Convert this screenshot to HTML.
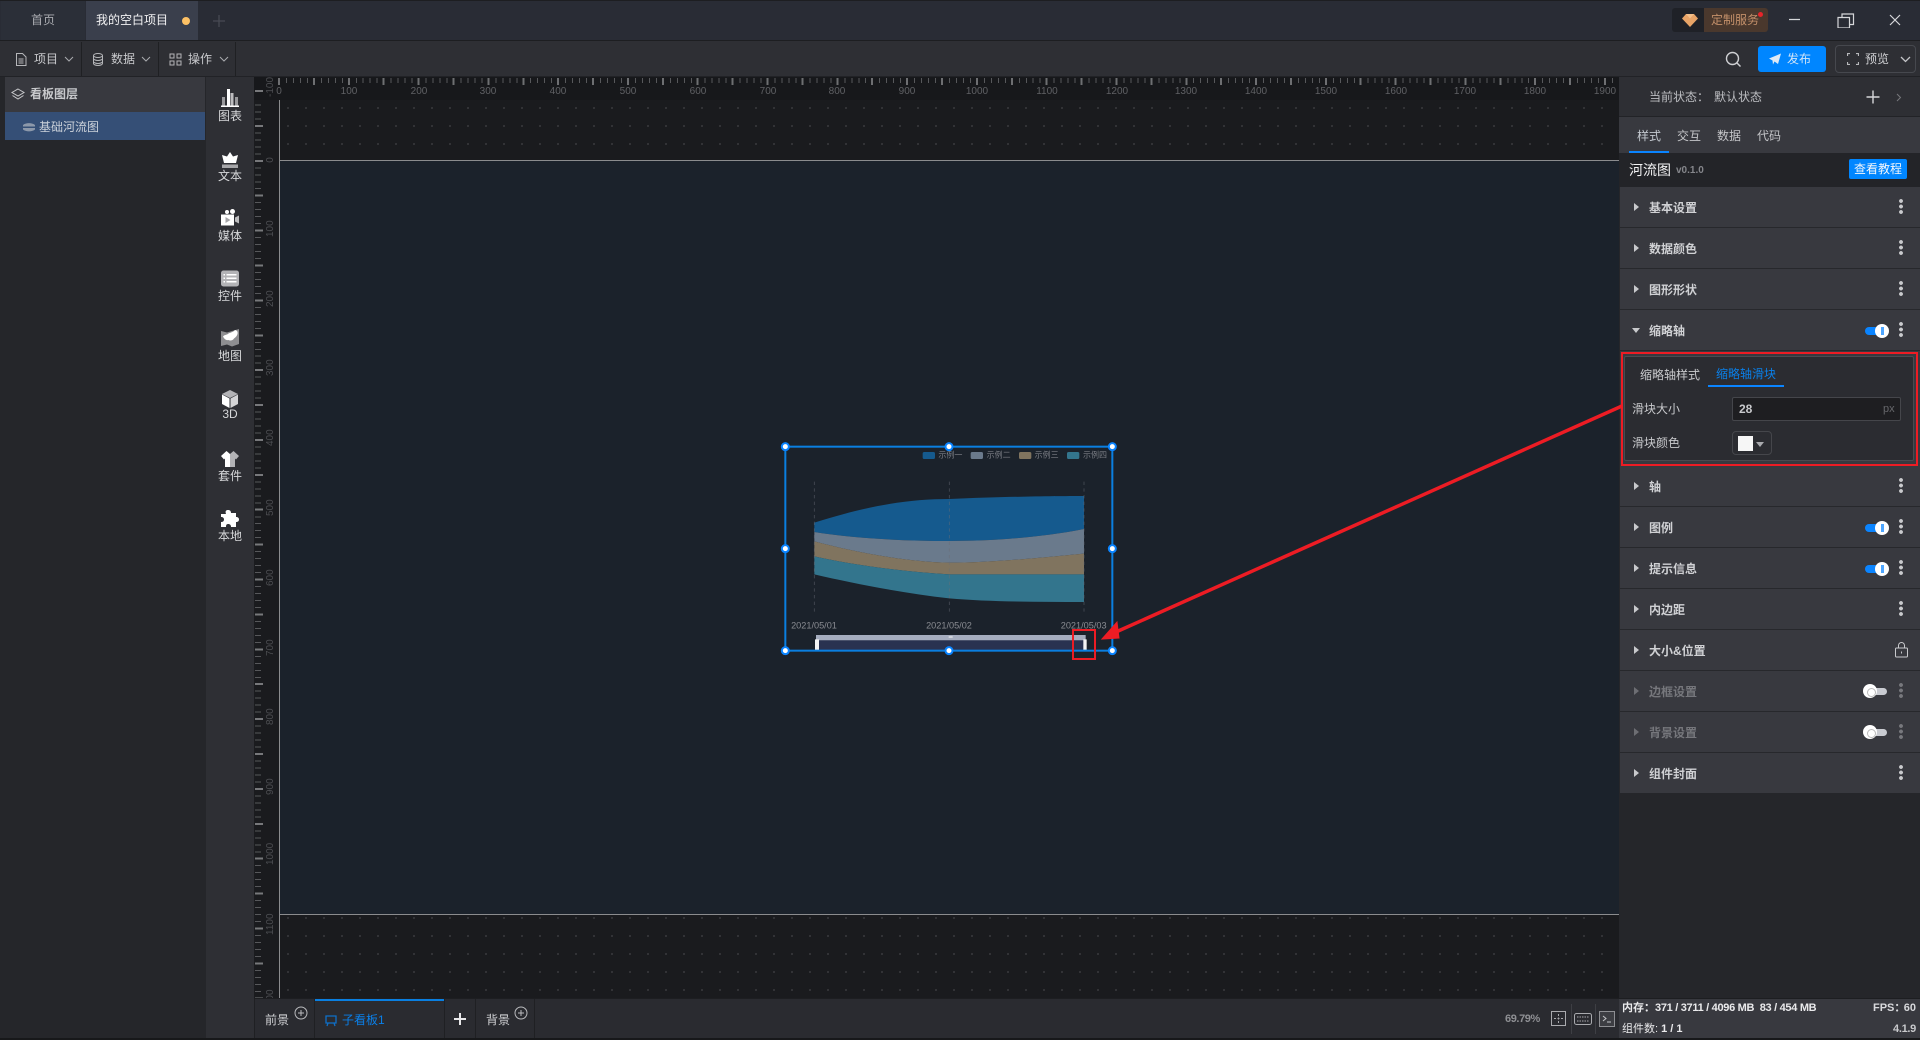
<!DOCTYPE html>
<html lang="zh"><head><meta charset="utf-8"><title>河流图</title>
<style>
*{box-sizing:border-box;margin:0;padding:0}
html,body{width:1920px;height:1040px;overflow:hidden;background:#1a1b1e}
body{position:relative;font-family:"Liberation Sans","Noto Sans CJK SC",sans-serif;font-size:12px;color:#d2d3d6}
.a{position:absolute}
.t{position:absolute;white-space:nowrap;line-height:16px;height:16px}
.rule{position:absolute;font-size:10px;color:#5f6064;line-height:12px;white-space:nowrap;transform:translateX(-50%)}
.vr{position:absolute;left:264px;width:14px;text-align:center;font-size:10px;color:#4c4d51;line-height:12px;transform:translateY(-50%) rotate(-90deg);white-space:nowrap}
.row{position:absolute;left:1620px;width:300px;background:#38393f;border-bottom:1px solid #27282c;height:41px}
.row .l{position:absolute;left:29px;top:13px;font-weight:700;color:#d0d1d4;line-height:16px;white-space:nowrap}
.row.dis .l{color:#76777c}
.tri{position:absolute;left:14px;top:16px;width:0;height:0;border-left:5px solid #c8c9cc;border-top:4px solid transparent;border-bottom:4px solid transparent}
.row.dis .tri{border-left-color:#6d6e73}
.dots{position:absolute;left:279px;top:12px;width:4px;height:15px;background:radial-gradient(circle at 2px 2px,#c9cacd 1.8px,transparent 2px) 0 0/4px 5.500px repeat-y}
.row.dis .dots{background-image:radial-gradient(circle at 2px 2px,#77787d 1.8px,transparent 2px)}
.on{position:absolute;left:245px;top:17px;width:23px;height:8px;border-radius:4px;background:#0a84ff}
.on:after{content:"";position:absolute;right:-1px;top:-3px;width:14px;height:14px;border-radius:50%;background:#fff}
.on:before{content:"";position:absolute;right:4px;top:0;width:3px;height:8px;background:#4ea6ff;z-index:1}
.off{position:absolute;left:250px;top:17px;width:17px;height:7px;border-radius:0 4px 4px 0;background:#c9cbd1}
.off:after{content:"";position:absolute;left:-7px;top:-4px;width:14px;height:14px;border-radius:50%;background:#fff}
.off:before{content:"";position:absolute;left:-3px;top:-0.5px;width:7px;height:7px;border-radius:50%;border:1px solid #bbb;z-index:1}
.sep{position:absolute;width:1px;background:#1f2023}
.ico{position:absolute;left:220px;width:20px;height:20px}
.il{position:absolute;left:206px;width:48px;text-align:center;color:#d7d8da;line-height:16px}
</style></head><body>

<!-- top bar -->
<div class="a" style="left:0;top:0;width:1920px;height:41px;background:#292c35;border-bottom:1px solid #1d1e21"></div>
<div class="a" style="left:0;top:0;width:1920px;height:1px;background:#1d1e21"></div>
<div class="a" style="left:1px;top:1px;width:84px;height:39px;background:#2b2f38"></div>
<div class="a" style="left:86px;top:1px;width:112px;height:39px;background:#3a3f4c"></div>
<div class="t" style="left:31px;top:12px;color:#a9abb0">首页</div>
<div class="t" style="left:96px;top:12px;color:#f2f2f3">我的空白项目</div>
<div class="a" style="left:182px;top:17px;width:8px;height:8px;border-radius:50%;background:#fdc165"></div>
<svg class="a" style="left:212px;top:14px" width="14" height="14"><path d="M7 1v12M1 7h12" stroke="#474a53" stroke-width="1.300"/></svg>

<div class="a" style="left:1672px;top:8px;width:96px;height:24px;background:#1f2127;border-radius:3px"></div>
<div class="a" style="left:1704px;top:8px;width:64px;height:24px;background:#4a382d;border-radius:0 3px 3px 0"></div>
<svg class="a" style="left:1682px;top:14px" width="16" height="13"><path d="M4 0h8l4 4.500-8 8.500-8-8.500z" fill="#e8a467"/><path d="M4 0l4 4.500L12 0zM0 4.500h16" fill="#f5c593" opacity=".8"/></svg>
<div class="t" style="left:1711px;top:12px;color:#c4906a">定制服务</div>
<div class="a" style="left:1758px;top:12px;width:5px;height:5px;border-radius:50%;background:#e8242a"></div>
<svg class="a" style="left:1787px;top:12px" width="120" height="16" fill="none" stroke="#d6d7da" stroke-width="1.200"><path d="M2 7.500h11M51 5.500h11.500v10.500h-11.500zM55 5.500v-3.500h11.500v10.500h-4M103 3l10 10M113 3l-10 10"/></svg>

<!-- toolbar -->
<div class="a" style="left:0;top:41px;width:1920px;height:36px;background:#2e2f34;border-bottom:1px solid #212226"></div>
<div class="sep" style="left:81px;top:42px;height:34px"></div>
<div class="sep" style="left:158px;top:42px;height:34px"></div>
<div class="sep" style="left:235px;top:42px;height:34px"></div>
<svg class="a" style="left:15px;top:53px" width="12" height="13" fill="none" stroke="#b5b6b9"><path d="M1.500.500h6l3.500 3.500v8.500h-9.500zM3.500 6h5M3.500 8h5M3.500 10h5"/></svg>
<div class="t" style="left:34px;top:51px;color:#c9cacd">项目</div>
<svg class="a" style="left:64px;top:56px" width="10" height="7" fill="none" stroke="#a9aaae"><path d="M1 1l4 4 4-4"/></svg>
<svg class="a" style="left:92px;top:53px" width="12" height="13" fill="none" stroke="#b5b6b9"><ellipse cx="6" cy="2.500" rx="4.500" ry="2"/><path d="M1.500 2.500v8c0 1 2 2 4.500 2s4.500-1 4.500-2v-8M1.500 5.500c0 1 2 2 4.500 2s4.500-1 4.500-2M1.500 8.500c0 1 2 2 4.500 2s4.500-1 4.500-2"/></svg>
<div class="t" style="left:111px;top:51px;color:#c9cacd">数据</div>
<svg class="a" style="left:141px;top:56px" width="10" height="7" fill="none" stroke="#a9aaae"><path d="M1 1l4 4 4-4"/></svg>
<svg class="a" style="left:169px;top:53px" width="13" height="13" fill="none" stroke="#b5b6b9"><path d="M1 1h4v4h-4zM8 1h4v4h-4zM1 8h4v4h-4zM8 8h4v4h-4z"/></svg>
<div class="t" style="left:188px;top:51px;color:#c9cacd">操作</div>
<svg class="a" style="left:219px;top:56px" width="10" height="7" fill="none" stroke="#a9aaae"><path d="M1 1l4 4 4-4"/></svg>

<svg class="a" style="left:1725px;top:51px" width="17" height="17" fill="none" stroke="#d0d1d4" stroke-width="1.400"><circle cx="7.500" cy="7.500" r="6"/><path d="M12 12l3.500 3.500"/></svg>
<div class="a" style="left:1758px;top:46px;width:68px;height:26px;background:#0086ff;border-radius:3px"></div>
<svg class="a" style="left:1769px;top:53px" width="12" height="12"><path d="M0 5.500L12 .5 9 11 5.500 8.500 4 11.500 3.500 7.500z" fill="#dfeaf5"/></svg>
<div class="t" style="left:1787px;top:51px;color:#cfe4f8">发布</div>
<div class="a" style="left:1835px;top:45px;width:81px;height:28px;border:1px solid #46484e;border-radius:4px"></div>
<svg class="a" style="left:1847px;top:53px" width="12" height="12" fill="none" stroke="#b8b9bc" stroke-width="1.200"><path d="M.5 3V.5H3M9 .5h2.500V3M11.500 9v2.500H9M3 11.500H.5V9"/></svg>
<div class="t" style="left:1865px;top:51px;color:#cfd0d3">预览</div>
<svg class="a" style="left:1900px;top:56px" width="11" height="7" fill="none" stroke="#c4c5c8" stroke-width="1.300"><path d="M1 1l4.500 4.500L10 1"/></svg>

<!-- left sidebar -->
<div class="a" style="left:0;top:77px;width:206px;height:961px;background:#25262a"></div>
<div class="a" style="left:5px;top:77px;width:200px;height:35px;background:#38393f"></div>
<div class="a" style="left:5px;top:112px;width:200px;height:28px;background:#354f76"></div>
<svg class="a" style="left:11px;top:88px" width="14" height="13" fill="none" stroke="#c8c9cc"><path d="M7 1l6 3.500-6 3.500-6-3.500zM1.500 7.500L7 11l5.500-3.500"/></svg>
<div class="t" style="left:30px;top:86px;font-weight:700;color:#c8c9cc">看板图层</div>
<svg class="a" style="left:23px;top:122px" width="12" height="11"><path d="M0 4.500V3C3 .5 9 .5 12 3v1.500zM0 6v1.500c3 2.500 9 2.500 12 0V6z" fill="#8c98aa"/></svg>
<div class="t" style="left:39px;top:119px;color:#ccd2da">基础河流图</div>

<!-- icon column -->
<div class="a" style="left:206px;top:77px;width:48px;height:961px;background:#2e2f34"></div>
<svg class="ico" style="top:88px" viewBox="0 0 20 20"><path d="M2 9h3v9H2zM15 9h3v9h-3z" fill="#9a9a9d"/><path d="M7 1h3v17H7z" fill="#fff"/><path d="M10.500 5h3v13h-3z" fill="#bdbdbf"/><path d="M1 17.500h18V19H1z" fill="#fff"/></svg>
<div class="il" style="top:108px">图表</div>
<svg class="ico" style="top:150px" viewBox="0 0 20 20"><path d="M10 2l3 4.500L18 5l-2 8H4L2 5l5 1.500z" fill="#fff"/><path d="M2 14.500h16V18H2z" fill="#a5a5a8"/></svg>
<div class="il" style="top:168px">文本</div>
<svg class="ico" style="top:208px" viewBox="0 0 20 20"><circle cx="7" cy="4" r="2" fill="#fff"/><circle cx="12.500" cy="3.500" r="2.500" fill="#fff"/><path d="M1 6.500h13v11H1z" fill="#fff"/><path d="M15 9.500l4-2v8l-4-2z" fill="#bdbdbf"/><path d="M5.500 9v6l5-3z" fill="#a5a5a8"/></svg>
<div class="il" style="top:228px">媒体</div>
<svg class="ico" style="top:269px" viewBox="0 0 20 20"><rect x="1" y="1.500" width="18" height="16" rx="2.500" fill="#b3b3b6"/><path d="M3.500 5H5v1.500H3.500zM3.500 8.500H5V10H3.500zM3.500 12H5v1.500H3.500zM6.500 5h10v1.500h-10zM6.500 8.500h10V10h-10zM6.500 12h10v1.500h-10z" fill="#fff"/></svg>
<div class="il" style="top:288px">控件</div>
<svg class="ico" style="top:328px" viewBox="0 0 20 20"><path d="M1 3l6 1.500 5-1.500 7-2v15l-7 2.500-5-2L1 18z" fill="#8e8e91"/><path d="M3 8.500c1.500-2 4-1.500 5.500-3 2-1 5-1.500 6.500-3.500 2 .5 3 1.500 2.500 4-.5 2-2 3.500-3.500 4.500-1 2-4 2.500-5.500 1.500-2 .5-4-.5-5.500-3.500z" fill="#fff"/></svg>
<div class="il" style="top:348px">地图</div>
<svg class="ico" style="top:389px" viewBox="0 0 20 20"><path d="M10 1l8 4-8 4-8-4z" fill="#b3b3b6"/><path d="M2 5.500l7.500 4V19L2 15z" fill="#fff"/><path d="M18 5.500l-7.500 4V19l7.500-4z" fill="#d4d4d6"/></svg>
<div class="il" style="top:406px">3D</div>
<svg class="ico" style="top:449px" viewBox="0 0 20 20"><path d="M6.500 2L1 7l3 3.500L5 9.500V18h5V5z" fill="#fff"/><path d="M13.500 2L19 7l-3 3.500L15 9.500V18h-5V5z" fill="#b3b3b6"/></svg>
<div class="il" style="top:468px">套件</div>
<svg class="ico" style="top:509px" viewBox="0 0 20 20"><path d="M8 1c2 0 3 1 3 3h5v4c2 0 3 1 3 2.500S18 13 16 13v5h-5c0-2-1-3-3-3s-2 2-2 3H1v-5c2 0 3-1 3-2.500S3 8 1 8V5h5C5 2 6 1 8 1z" fill="#fff"/></svg>
<div class="il" style="top:528px">本地</div>

<!-- canvas -->
<div class="a" style="left:254px;top:77px;width:1366px;height:921px;background:#1a1b1e"></div>
<div class="a" style="left:280px;top:100px;width:1340px;height:60px;background:radial-gradient(circle at 8px 8px,#38393c .8px,transparent 1.100px) 0 0/18px 18px"></div>
<div class="a" style="left:280px;top:915px;width:1340px;height:83px;background:radial-gradient(circle at 8px 3px,#38393c .8px,transparent 1.100px) 0 0/18px 18px"></div>
<div class="a" style="left:280px;top:161px;width:1340px;height:753px;background:#1b222b"></div>
<div class="a" style="left:279px;top:160px;width:1341px;height:1px;background:#8b8c8e"></div>
<div class="a" style="left:279px;top:914px;width:1341px;height:1px;background:#8b8c8e"></div>
<div class="a" style="left:279px;top:100px;width:1px;height:898px;background:#8b8c8e"></div>

<!-- rulers -->
<div class="a" style="left:254px;top:77px;width:1366px;height:23px;background:#17181b"></div>
<div class="a" style="left:279px;top:78px;width:1341px;height:5px;background:repeating-linear-gradient(90deg,#57585b 0 1px,transparent 1px 6.979px)"></div>
<div class="a" style="left:278px;top:78px;width:1342px;height:7px;background:repeating-linear-gradient(90deg,#6e6f72 0 2px,transparent 2px 34.895px)"></div>
<div class="a" style="left:255px;top:100px;width:6px;height:898px;background:repeating-linear-gradient(180deg,transparent 0 4.500px,#57585b 4.500px 5.500px,transparent 5.500px 6.979px)"></div>
<div class="a" style="left:255px;top:90px;width:8px;height:908px;background:repeating-linear-gradient(180deg,#77787b 0 2px,transparent 2px 34.895px)"></div>
<div class="rule" style="left:279px;top:86px">0</div><div class="rule" style="left:349px;top:86px">100</div><div class="rule" style="left:419px;top:86px">200</div><div class="rule" style="left:488px;top:86px">300</div><div class="rule" style="left:558px;top:86px">400</div><div class="rule" style="left:628px;top:86px">500</div><div class="rule" style="left:698px;top:86px">600</div><div class="rule" style="left:768px;top:86px">700</div><div class="rule" style="left:837px;top:86px">800</div><div class="rule" style="left:907px;top:86px">900</div><div class="rule" style="left:977px;top:86px">1000</div><div class="rule" style="left:1047px;top:86px">1100</div><div class="rule" style="left:1117px;top:86px">1200</div><div class="rule" style="left:1186px;top:86px">1300</div><div class="rule" style="left:1256px;top:86px">1400</div><div class="rule" style="left:1326px;top:86px">1500</div><div class="rule" style="left:1396px;top:86px">1600</div><div class="rule" style="left:1465px;top:86px">1700</div><div class="rule" style="left:1535px;top:86px">1800</div><div class="rule" style="left:1605px;top:86px">1900</div>
<div class="vr" style="top:90px">-100</div><div class="vr" style="top:160px">0</div><div class="vr" style="top:230px">100</div><div class="vr" style="top:300px">200</div><div class="vr" style="top:369px">300</div><div class="vr" style="top:439px">400</div><div class="vr" style="top:509px">500</div><div class="vr" style="top:579px">600</div><div class="vr" style="top:649px">700</div><div class="vr" style="top:718px">800</div><div class="vr" style="top:788px">900</div><div class="vr" style="top:858px">1000</div><div class="vr" style="top:928px">1100</div><div class="vr" style="top:995px">00</div>

<!-- widget -->
<svg class="a" style="left:770px;top:430px" width="360" height="240" viewBox="0 0 1080 720">
<g font-family="Liberation Sans,Noto Sans CJK SC,sans-serif" font-size="24" fill="#7c7f86">
<rect x="458" y="66" width="37" height="21" rx="5" fill="#155a8e"/><text x="505" y="82">示例一</text>
<rect x="602" y="66" width="37" height="21" rx="5" fill="#6a7a8c"/><text x="650" y="82">示例二</text>
<rect x="747" y="66" width="37" height="21" rx="5" fill="#80745f"/><text x="794" y="82">示例三</text>
<rect x="891" y="66" width="37" height="21" rx="5" fill="#33758d"/><text x="939" y="82">示例四</text>
</g>
<path d="M133 278C300 225 420 207 538 207C700 200 850 198 942 198L942 297C800 325 650 333 538 333C400 333 250 325 133 306Z" fill="#155a8e"/>
<path d="M133 306C250 325 400 333 538 333C650 333 800 325 942 297L942 371C800 385 650 398 538 398C400 395 250 365 133 334Z" fill="#6a7a8c"/>
<path d="M133 334C250 365 400 395 538 398C650 398 800 385 942 371L942 433L538 433C400 425 250 405 133 379Z" fill="#80745f"/>
<path d="M133 379C250 405 400 425 538 433L942 433L942 516C800 516 650 515 538 505C400 490 250 460 133 433Z" fill="#33758d"/>
<g stroke="#6a6e76" stroke-opacity=".55" stroke-width="2.500" stroke-dasharray="10 10"><path d="M133 155V555M538 155V555M942 155V555"/></g>
<g font-family="Liberation Sans,sans-serif" font-size="27.500" fill="#8a8c92" text-anchor="middle"><text x="132" y="595">2021/05/01</text><text x="537" y="595">2021/05/02</text><text x="941" y="595">2021/05/03</text></g>
<path d="M138 615H947V631H138z" fill="#a5adbf"/>
<path d="M140 631H945V660H140z" fill="#293250"/>
<path d="M536 619h12v4h-12z" fill="#e4e6ea"/>
<path d="M135 628h12v33h-12zM940 628h10v33h-10z" fill="#f4f4f4"/>
<rect x="46" y="50" width="981" height="612" fill="none" stroke="#0a7fe0" stroke-width="6"/>
<g fill="#fff" stroke="#0a84ff" stroke-width="6"><circle cx="46" cy="50" r="10.500"/><circle cx="537" cy="50" r="10.500"/><circle cx="1027" cy="50" r="10.500"/><circle cx="46" cy="356" r="10.500"/><circle cx="1027" cy="356" r="10.500"/><circle cx="46" cy="662" r="10.500"/><circle cx="537" cy="662" r="10.500"/><circle cx="1027" cy="662" r="10.500"/></g>
</svg>

<!-- right panel -->
<div class="a" style="left:1619px;top:77px;width:301px;height:921px;background:#25262a"></div>
<div class="a" style="left:1619px;top:77px;width:301px;height:39px;background:#2e2f34"></div>
<div class="a" style="left:1619px;top:116px;width:301px;height:1px;background:#222327"></div>
<div class="t" style="left:1649px;top:89px;color:#bcbdc1">当前状态：</div>
<div class="t" style="left:1714px;top:89px;color:#bcbdc1">默认状态</div>
<svg class="a" style="left:1866px;top:90px" width="14" height="14"><path d="M7 .5v13M.5 7h13" stroke="#d6d7da" stroke-width="1.400"/></svg>
<svg class="a" style="left:1896px;top:93px" width="6" height="9" fill="none" stroke="#77787c"><path d="M1 1l3.500 3.500L1 8"/></svg>
<div class="a" style="left:1619px;top:117px;width:301px;height:36px;background:#38393f"></div>
<div class="t" style="left:1637px;top:128px;color:#c4c9d0">样式</div>
<div class="t" style="left:1677px;top:128px;color:#c4c5c8">交互</div>
<div class="t" style="left:1717px;top:128px;color:#c4c5c8">数据</div>
<div class="t" style="left:1757px;top:128px;color:#c4c5c8">代码</div>
<div class="a" style="left:1629px;top:151px;width:40px;height:2px;background:#0a84ff"></div>
<div class="a" style="left:1619px;top:153px;width:301px;height:34px;background:#232428"></div>
<div class="t" style="left:1629px;top:162px;font-size:14px;color:#f2f2f3">河流图</div>
<div class="t" style="left:1676px;top:163px;font-size:10px;font-weight:700;color:#85868b">v0.1.0</div>
<div class="a" style="left:1849px;top:159px;width:58px;height:20px;background:#0086ff;border-radius:2px;text-align:center;line-height:20px;color:#f2f6fb">查看教程</div>

<div class="row" style="top:187px"><i class="tri"></i><div class="l">基本设置</div><i class="dots"></i></div>
<div class="row" style="top:228px"><i class="tri"></i><div class="l">数据颜色</div><i class="dots"></i></div>
<div class="row" style="top:269px"><i class="tri"></i><div class="l">图形形状</div><i class="dots"></i></div>
<div class="row" style="top:310px"><i style="position:absolute;left:12px;top:18px;width:0;height:0;border-top:5px solid #c8c9cc;border-left:4px solid transparent;border-right:4px solid transparent"></i><div class="l">缩略轴</div><i class="on"></i><i class="dots"></i></div>

<div class="a" style="left:1620px;top:351px;width:300px;height:115px;background:#38393f"></div>
<div class="a" style="left:1624px;top:356px;width:290px;height:105px;background:#2b2c31;border:1px solid #4a4b50;border-radius:2px"></div>
<div class="t" style="left:1640px;top:367px;color:#c8c9cc">缩略轴样式</div>
<div class="t" style="left:1716px;top:366px;color:#0a7fe8">缩略轴滑块</div>
<div class="a" style="left:1708px;top:385px;width:76px;height:2px;background:#0a84ff"></div>
<div class="t" style="left:1632px;top:401px;color:#c8c9cc">滑块大小</div>
<div class="a" style="left:1732px;top:397px;width:169px;height:24px;background:#1e1e21;border:1px solid #45464b;border-radius:2px"></div>
<div class="t" style="left:1739px;top:401px;color:#c8c9cc;font-weight:700">28</div>
<div class="t" style="left:1883px;top:401px;color:#66676b;font-size:11px">px</div>
<div class="t" style="left:1632px;top:435px;color:#c8c9cc">滑块颜色</div>
<div class="a" style="left:1732px;top:431px;width:40px;height:24px;border:1px solid #45464b;border-radius:4px"></div>
<div class="a" style="left:1738px;top:436px;width:15px;height:15px;background:#f6f6f6"></div>
<div class="a" style="left:1756px;top:442px;width:0;height:0;border-top:5px solid #a9aaae;border-left:4.500px solid transparent;border-right:4.500px solid transparent"></div>

<div class="row" style="top:466px"><i class="tri"></i><div class="l">轴</div><i class="dots"></i></div>
<div class="row" style="top:507px"><i class="tri"></i><div class="l">图例</div><i class="on"></i><i class="dots"></i></div>
<div class="row" style="top:548px"><i class="tri"></i><div class="l">提示信息</div><i class="on"></i><i class="dots"></i></div>
<div class="row" style="top:589px"><i class="tri"></i><div class="l">内边距</div><i class="dots"></i></div>
<div class="row" style="top:630px"><i class="tri"></i><div class="l">大小&amp;位置</div><svg class="a" style="left:275px;top:12px" width="13" height="16" fill="none" stroke="#c8c9cc"><rect x=".5" y="6" width="12" height="9" rx="1"/><path d="M3.500 6V3.500a3 3 0 0 1 6 0V6M6.500 9.500v2"/></svg></div>
<div class="row dis" style="top:671px"><i class="tri"></i><div class="l">边框设置</div><i class="off"></i><i class="dots"></i></div>
<div class="row dis" style="top:712px"><i class="tri"></i><div class="l">背景设置</div><i class="off"></i><i class="dots"></i></div>
<div class="row" style="top:753px;height:40px;border-bottom:0"><i class="tri"></i><div class="l">组件封面</div><i class="dots"></i></div>

<!-- bottom bar -->
<div class="a" style="left:254px;top:998px;width:1366px;height:40px;background:#2a2b30;border-top:1px solid #1d1e21"></div>
<div class="sep" style="left:254px;top:999px;height:39px"></div>
<div class="sep" style="left:314px;top:999px;height:39px"></div>
<div class="sep" style="left:444px;top:999px;height:39px"></div>
<div class="sep" style="left:475px;top:999px;height:39px"></div>
<div class="sep" style="left:534px;top:999px;height:39px"></div>
<div class="t" style="left:265px;top:1012px;color:#cfd0d3">前景</div>
<svg class="a" style="left:294px;top:1006px" width="14" height="14" fill="none" stroke="#bcbdc0"><circle cx="7" cy="7" r="6"/><path d="M7 4v6M4 7h6"/></svg>
<div class="a" style="left:315px;top:999px;width:129px;height:1.500px;background:#0a7fe0"></div>
<svg class="a" style="left:325px;top:1015px" width="12" height="12" fill="none" stroke="#0e6fc8" stroke-width="1.300"><path d="M1 1h10v7H1zM3 8l-1 3M9 8l1 3"/></svg>
<div class="t" style="left:342px;top:1012px;color:#0a7fe8">子看板1</div>
<svg class="a" style="left:454px;top:1013px" width="12" height="12"><path d="M6 0v12M0 6h12" stroke="#e8e8ea" stroke-width="2"/></svg>
<div class="t" style="left:486px;top:1012px;color:#cfd0d3">背景</div>
<svg class="a" style="left:514px;top:1006px" width="14" height="14" fill="none" stroke="#bcbdc0"><circle cx="7" cy="7" r="6"/><path d="M7 4v6M4 7h6"/></svg>

<div class="t" style="left:1505px;top:1011px;font-size:11px;font-weight:700;color:#8e8f93;letter-spacing:-.4px">69.79%</div>
<svg class="a" style="left:1551px;top:1011px" width="16" height="16" fill="none" stroke="#a9aaae"><rect x=".5" y=".5" width="14" height="14"/><path d="M7.500 3v9M3 7.500h9" stroke-dasharray="2 1.500"/></svg>
<div class="sep" style="left:1571px;top:1004px;height:30px;background:#3e3f44"></div>
<svg class="a" style="left:1574px;top:1013px" width="19" height="13" fill="none" stroke="#a9aaae"><rect x=".5" y=".5" width="17" height="11" rx="2"/><path d="M3 4h12M3 8h12" stroke-dasharray="1.500 1"/></svg>
<div class="sep" style="left:1595px;top:1004px;height:30px;background:#3e3f44"></div>
<svg class="a" style="left:1599px;top:1011px" width="16" height="16" fill="none" stroke="#8e8f93"><rect x=".5" y=".5" width="15" height="15" fill="#3d3e43"/><path d="M4 5l3 2.500L4 10M8 11h4" stroke="#c4c5c8"/></svg>

<div class="a" style="left:1619px;top:998px;width:301px;height:40px;background:#38393f;border-top:1px solid #1d1e21"></div>
<div class="t" style="left:1622px;top:1000px;font-size:11px;font-weight:700;color:#eaeaec">内存：<span style="letter-spacing:-.3px">371 / 3711 / 4096 MB&nbsp; 83 / 454 MB</span></div>
<div class="t" style="left:1873px;top:1000px;font-size:11px;font-weight:700;color:#d8d9dc">FPS：</div>
<div class="t" style="right:4px;top:1000px;font-size:11px;font-weight:700;color:#d8d9dc">60</div>
<div class="t" style="left:1622px;top:1021px;font-size:11px;color:#eaeaec">组件数: <b>1 / 1</b></div>
<div class="t" style="right:4px;top:1021px;font-size:11px;font-weight:700;color:#c8c9cc;letter-spacing:-.3px">4.1.9</div>
<div class="a" style="left:0;top:1038px;width:1920px;height:2px;background:#17181a"></div>

<!-- annotations -->
<svg class="a" style="left:0;top:0" width="1920" height="1040">
<rect x="1622" y="353" width="295" height="112" fill="none" stroke="#ed1c24" stroke-width="2"/>
<rect x="1073" y="630" width="22" height="29" fill="none" stroke="#ed1c24" stroke-width="2"/>
<path d="M1622 406L1116 632" stroke="#ed1c24" stroke-width="3.500" fill="none"/>
<path d="M1102 639L1117 622L1119 638Z" fill="#ed1c24" stroke="#ed1c24"/>
</svg>
</body></html>
